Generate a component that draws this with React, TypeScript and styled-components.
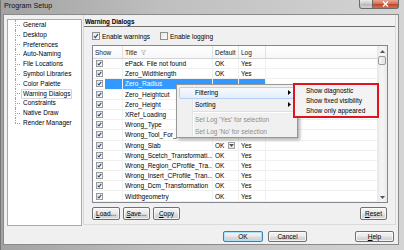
import React from 'react';
import styled, { createGlobalStyle } from 'styled-components';

const GlobalStyle = createGlobalStyle`
  * { box-sizing: border-box; }
  html, body { margin: 0; padding: 0; background: #ffffff; }
  body {
    font-family: 'Liberation Sans', Arial, sans-serif;
    font-size: 6.5px;
    color: #000;
  }
`;

const Window = styled.div`
  position: relative;
  width: 404px;
  height: 250px;
  display: flex;
  flex-direction: column;
  overflow: hidden;
  border-left: 1px solid #777;
  background: linear-gradient(to right, #a2a2a2 0%, #bfbfbf 40%, #d4d4d4 100%);
`;

const TitleBar = styled.div`
  height: 14px;
  display: flex;
  align-items: flex-start;
  padding: 0 5px 0 3px;
`;

const Caption = styled.span`
  font-size: 7.2px;
  line-height: 12px;
  color: #111;
`;

const CaptionButtons = styled.div`
  margin-left: auto;
  display: flex;
`;

const HelpButton = styled.div`
  width: 14px;
  height: 9px;
  display: flex;
  align-items: center;
  justify-content: center;
  border: 1px solid #6a6a6a;
  border-top: none;
  border-radius: 0 0 0 3px;
  background: linear-gradient(#ebebeb, #cdcdcd 50%, #b9b9b9 51%, #d2d2d2);
  color: #fff;
  font-size: 6px;
  font-weight: bold;
  text-shadow: 0 0 1px #333;
`;

const CloseButton = styled(HelpButton)`
  width: 26px;
  border-left: none;
  border-radius: 0 0 3px 0;
  background: linear-gradient(#eaa592, #d66d56 50%, #c4432b 51%, #d3704f);
`;

const Client = styled.div`
  flex: 1;
  margin: 0 5px 5px 2px;
  border: 1px solid #8a8a8a;
  background: #f0f0f0;
  display: flex;
  flex-direction: column;
`;

const Main = styled.div`
  display: flex;
  align-items: flex-start;
  gap: 1px;
  padding: 0 2px 0 3px;
`;

const Tree = styled.ul`
  width: 75px;
  height: 207px;
  margin: 4px 0 0;
  padding: 0;
  list-style: none;
  background: #fff;
  border: 1px solid #a9a9a9;
`;

const TreeItem = styled.li<{ $last?: boolean }>`
  position: relative;
  height: 9.8px;
  line-height: 9.8px;
  padding-left: 13px;
  white-space: nowrap;

  &::before {
    content: '';
    position: absolute;
    left: 7px;
    top: 50%;
    width: 5px;
    border-top: 1px dotted #a0a0a0;
  }
  &::after {
    content: '';
    position: absolute;
    left: 7px;
    top: 0;
    bottom: ${(p) => (p.$last ? '50%' : '0')};
    border-left: 1px dotted #a0a0a0;
  }
`;

const TreeLabel = styled.span<{ $selected?: boolean }>`
  display: inline-block;
  padding: 0 1px;
  line-height: 8px;
  border: 1px solid ${(p) => (p.$selected ? '#d6d6d6' : 'transparent')};
`;

const Panel = styled.div`
  width: 313px;
  height: 210px;
  border: 1px solid #dadada;
  border-top: none;
  display: flex;
  flex-direction: column;
`;

const PanelHeader = styled.div`
  height: 12px;
  padding-left: 1px;
  font-weight: bold;
  font-size: 6.3px;
  line-height: 14px;
  border-bottom: 1px solid #6d6d6d;
`;

const Options = styled.div`
  display: flex;
  align-items: center;
  height: 8px;
  margin: 5px 0 0 8px;
`;

const OptionLabel = styled.label<{ $w?: number }>`
  display: flex;
  align-items: center;
  gap: 2px;
  width: ${(p) => (p.$w ? `${p.$w}px` : 'auto')};
`;

const Table = styled.div`
  margin: 5px 0 0 8px;
  width: 296px;
  height: 158px;
  border: 1px solid #828790;
  background: #fff;
  display: flex;
`;

const Grid = styled.div`
  flex: 1;
  display: flex;
  flex-direction: column;
  overflow: hidden;
`;

const Row = styled.div<{ $header?: boolean }>`
  display: grid;
  grid-template-columns: 30px 90px 26px 27px 1fr;
  height: ${(p) => (p.$header ? '13px' : '10.2px')};
  flex: none;
  border-bottom: 1px solid ${(p) => (p.$header ? '#d5d5d5' : '#f0f0f0')};
  background: ${(p) => (p.$header ? 'linear-gradient(#ffffff, #f6f7f9)' : 'transparent')};
  color: ${(p) => (p.$header ? '#222' : '#000')};
`;

const Cell = styled.div<{ $sel?: boolean; $header?: boolean; $last?: boolean }>`
  display: flex;
  align-items: center;
  padding-left: 2px;
  white-space: nowrap;
  overflow: hidden;
  border-right: ${(p) => (p.$last ? 'none' : `1px solid ${p.$header ? '#e2e2e2' : '#f0f0f0'}`)};
  background: ${(p) => (p.$sel ? '#3399ff' : 'transparent')};
  color: ${(p) => (p.$sel ? '#fff' : 'inherit')};
`;

const ShowCell = styled.div`
  display: flex;
  align-items: center;
  padding-left: 3px;
  gap: 2px;
  border-right: 1px solid #f0f0f0;
`;

const SelFill = styled.span<{ $sel?: boolean }>`
  flex: 1;
  align-self: stretch;
  background: ${(p) => (p.$sel ? '#3399ff' : 'transparent')};
`;

const Combo = styled.span`
  margin-left: auto;
  margin-right: 3px;
  width: 7px;
  height: 7px;
  border: 1px solid #a3a3a3;
  background: linear-gradient(#fdfdfd, #e6e6e6);
  display: flex;
  align-items: center;
  justify-content: center;
`;

const ScrollBar = styled.div`
  width: 10px;
  display: flex;
  flex-direction: column;
  align-items: center;
  background: linear-gradient(to right, #e8e8e8, #f4f4f4 40%, #f4f4f4 60%, #e8e8e8);
`;

const ScrollArrow = styled.div`
  height: 10px;
  display: flex;
  align-items: center;
  justify-content: center;
`;

const Thumb = styled.div`
  width: 8px;
  height: 9px;
  border: 1px solid #9a9a9a;
  border-radius: 2px;
  background: linear-gradient(to right, #f5f5f5, #e2e2e2);
`;

const Spacer = styled.div`
  flex: 1;
`;

const ButtonRow = styled.div`
  display: flex;
  gap: 3px;
  width: 296px;
  margin: 4px 0 0 8px;
`;

const Button = styled.button<{ $w: number; $h?: number; $focused?: boolean }>`
  width: ${(p) => p.$w}px;
  height: ${(p) => p.$h ?? 13}px;
  padding: 0;
  font: inherit;
  color: #000;
  border: 1px solid ${(p) => (p.$focused ? '#3c7fb1' : '#707070')};
  border-radius: 2px;
  background: linear-gradient(#f3f3f3 0%, #ebebeb 48%, #dddddd 52%, #cfcfcf 100%);
  box-shadow: inset 0 0 0 1px ${(p) => (p.$focused ? '#aee0f8' : 'rgba(255,255,255,0.7)')};
`;

const PushRight = styled.div`
  margin-left: auto;
  margin-right: 1px;
`;

const Footer = styled.div`
  display: flex;
  gap: 5px;
  margin-top: 5px;
  padding-right: 4px;
  justify-content: flex-end;
`;

const HelpSlot = styled.div`
  margin-left: 43px;
`;

const ContextMenu = styled.div`
  position: absolute;
  left: 175px;
  top: 84px;
  width: 122px;
  padding: 2px 2px 0;
  border: 1px solid #979797;
  box-shadow: 2px 2px 3px rgba(0, 0, 0, 0.3);
  background: linear-gradient(
    to right,
    #f0f0f0 0 15px,
    #e2e3e3 15px 16px,
    #ffffff 16px 17px,
    #f0f0f0 17px
  );
  z-index: 5;
`;

const MenuItem = styled.div<{ $hot?: boolean; $disabled?: boolean }>`
  height: 11.5px;
  display: flex;
  align-items: center;
  padding: 0 3px 0 15px;
  border: 1px solid ${(p) => (p.$hot ? '#b3d2f6' : 'transparent')};
  border-radius: 2px;
  background: ${(p) => (p.$hot ? 'linear-gradient(#f7fafe, #e3eefb)' : 'transparent')};
  color: ${(p) => (p.$disabled ? '#8d8d8d' : '#000')};
`;

const Arrow = styled.span`
  margin-left: auto;
  display: flex;
`;

const MenuSeparator = styled.div`
  height: 4px;
  margin-left: 14px;
  display: flex;
  align-items: center;

  &::after {
    content: '';
    flex: 1;
    border-top: 1px solid #e0e0e0;
    border-bottom: 1px solid #fff;
  }
`;

const SubMenu = styled.div`
  position: absolute;
  left: 292px;
  top: 83px;
  width: 86px;
  height: 35px;
  padding-top: 1px;
  border: 2px solid #e0141e;
  background: #f3f3f3;
  z-index: 6;
`;

const SubItem = styled.div`
  height: 10px;
  line-height: 10px;
  padding-left: 11px;
  white-space: nowrap;
`;

const Check = ({ on = true, size = 7 }: { on?: boolean; size?: number }) => (
  <svg width={size} height={size} viewBox="0 0 8 8" style={{ flex: 'none' }}>
    <defs>
      <linearGradient id="cb" x1="0" y1="0" x2="1" y2="1">
        <stop offset="0" stopColor="#dfe1e4" />
        <stop offset="1" stopColor="#ffffff" />
      </linearGradient>
    </defs>
    <rect x="0.5" y="0.5" width="7" height="7" fill="url(#cb)" stroke="#8e8f8f" />
    {on && <path d="M2 4.2 L3.4 5.6 L6 2.2" fill="none" stroke="#31457a" strokeWidth="1.2" />}
  </svg>
);

const Tri = ({ dir }: { dir: 'up' | 'down' | 'right' }) => {
  const d = dir === 'up' ? 'M0 3 L2.5 0 L5 3 Z' : dir === 'down' ? 'M0 0 L5 0 L2.5 3 Z' : 'M0 0 L3 2.5 L0 5 Z';
  const w = dir === 'right' ? 3 : 5;
  const h = dir === 'right' ? 5 : 3;
  return (
    <svg width={w} height={h} viewBox={`0 0 ${w} ${h}`}>
      <path d={d} fill={dir === 'right' ? '#000' : '#555'} />
    </svg>
  );
};

const Funnel = () => (
  <svg width="5" height="5" viewBox="0 0 5 5" style={{ marginLeft: 4 }}>
    <path d="M0 0 H5 L3 2.4 V5 L2 4.3 V2.4 Z" fill="none" stroke="#a9a9a9" strokeWidth="0.7" />
  </svg>
);

const treeItems = [
  'General',
  'Desktop',
  'Preferences',
  'Auto-Naming',
  'File Locations',
  'Symbol Libraries',
  'Color Palette',
  'Warning Dialogs',
  'Constraints',
  'Native Draw',
  'Render Manager',
];

const rows = [
  'ePack. File not found',
  'Zero_Widthlength',
  'Zero_Radius',
  'Zero_Heightcut',
  'Zero_Height',
  'XRef_Loading',
  'Wrong_Type',
  'Wrong_Tool_For_Dra...',
  'Wrong_Slab',
  'Wrong_Scetch_Transformati...',
  'Wrong_Region_CProfile_Tra...',
  'Wrong_Insert_CProfile_Tran...',
  'Wrong_Dcm_Transformation',
  'Widthgeometry',
];

// rows whose Default/Log cells sit fully under the context menu
const covered = (i: number) => i >= 2 && i <= 6;

const App = () => (
  <>
    <GlobalStyle />
    <Window>
      <TitleBar>
        <Caption>Program Setup</Caption>
        <CaptionButtons>
          <HelpButton>?</HelpButton>
          <CloseButton>
            <svg width="7" height="6" viewBox="0 0 7 6">
              <path d="M1 0.5 L6 5.5 M6 0.5 L1 5.5" stroke="#fff" strokeWidth="1.4" />
            </svg>
          </CloseButton>
        </CaptionButtons>
      </TitleBar>

      <Client>
        <Main>
          <Tree>
            {treeItems.map((t, i) => (
              <TreeItem key={t} $last={i === treeItems.length - 1}>
                <TreeLabel $selected={t === 'Warning Dialogs'}>{t}</TreeLabel>
              </TreeItem>
            ))}
          </Tree>

          <Panel>
            <PanelHeader>Warning Dialogs</PanelHeader>
            <Options>
              <OptionLabel $w={68}>
                <Check size={8} />
                Enable warnings
              </OptionLabel>
              <OptionLabel>
                <Check size={8} on={false} />
                Enable logging
              </OptionLabel>
            </Options>

            <Table>
              <Grid>
                <Row $header>
                  <Cell $header>Show</Cell>
                  <Cell $header>
                    Title
                    <Funnel />
                  </Cell>
                  <Cell $header>Default</Cell>
                  <Cell $header>Log</Cell>
                  <Cell $header $last />
                </Row>
                {rows.map((title, i) => {
                  const sel = i === 2;
                  const hide = covered(i);
                  return (
                    <Row key={title}>
                      <ShowCell>
                        <Check />
                        <SelFill $sel={sel} />
                      </ShowCell>
                      <Cell $sel={sel}>{title}</Cell>
                      <Cell $sel={sel}>
                        {hide ? '' : 'OK'}
                        {title === 'Wrong_Slab' && (
                          <Combo>
                            <Tri dir="down" />
                          </Combo>
                        )}
                      </Cell>
                      <Cell $sel={sel}>{hide ? '' : 'Yes'}</Cell>
                      <Cell $last />
                    </Row>
                  );
                })}
              </Grid>
              <ScrollBar>
                <ScrollArrow>
                  <Tri dir="up" />
                </ScrollArrow>
                <Thumb />
                <Spacer />
                <ScrollArrow>
                  <Tri dir="down" />
                </ScrollArrow>
              </ScrollBar>
            </Table>

            <ButtonRow>
              <Button $w={28}>
                <u>L</u>oad...
              </Button>
              <Button $w={27}>
                <u>S</u>ave...
              </Button>
              <Button $w={27}>
                <u>C</u>opy
              </Button>
              <PushRight>
                <Button $w={27}>
                  <u>R</u>eset
                </Button>
              </PushRight>
            </ButtonRow>
          </Panel>
        </Main>

        <Footer>
          <Button $w={40} $h={11} $focused>
            OK
          </Button>
          <Button $w={39} $h={11}>
            Cancel
          </Button>
          <HelpSlot>
            <Button $w={39} $h={11}>
              <u>H</u>elp
            </Button>
          </HelpSlot>
        </Footer>
      </Client>

      <ContextMenu>
        <MenuItem $hot>
          Filtering
          <Arrow>
            <Tri dir="right" />
          </Arrow>
        </MenuItem>
        <MenuItem>
          Sorting
          <Arrow>
            <Tri dir="right" />
          </Arrow>
        </MenuItem>
        <MenuSeparator />
        <MenuItem $disabled>Set Log 'Yes' for selection</MenuItem>
        <MenuItem $disabled>Set Log 'No' for selection</MenuItem>
      </ContextMenu>

      <SubMenu>
        <SubItem>Show diagnostic</SubItem>
        <SubItem>Show fixed visibility</SubItem>
        <SubItem>Show only appeared</SubItem>
      </SubMenu>
    </Window>
  </>
);

export default App;
